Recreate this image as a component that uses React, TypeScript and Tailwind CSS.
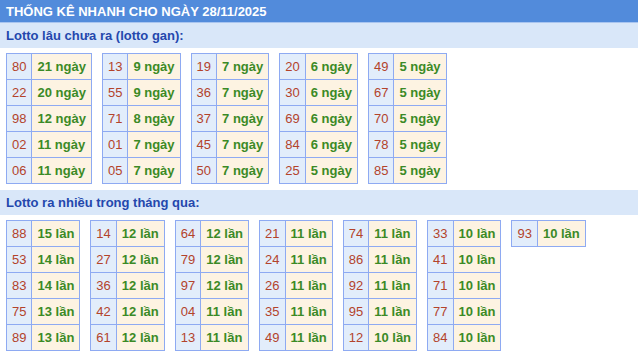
const gan: [string, number][][] = [
  [['80', 21], ['22', 20], ['98', 12], ['02', 11], ['06', 11]],
  [['13', 9], ['55', 9], ['71', 8], ['01', 7], ['05', 7]],
  [['19', 7], ['36', 7], ['37', 7], ['45', 7], ['50', 7]],
  [['20', 6], ['30', 6], ['69', 6], ['84', 6], ['25', 5]],
  [['49', 5], ['67', 5], ['70', 5], ['78', 5], ['85', 5]],
]

const nhieu: [string, number][][] = [
  [['88', 15], ['53', 14], ['83', 14], ['75', 13], ['89', 13]],
  [['14', 12], ['27', 12], ['36', 12], ['42', 12], ['61', 12]],
  [['64', 12], ['79', 12], ['97', 12], ['04', 11], ['13', 11]],
  [['21', 11], ['24', 11], ['26', 11], ['35', 11], ['49', 11]],
  [['74', 11], ['86', 11], ['92', 11], ['95', 11], ['12', 10]],
  [['33', 10], ['41', 10], ['71', 10], ['77', 10], ['84', 10]],
  [['93', 10]],
]

function StatTable({ rows, unit }: { rows: [string, number][]; unit: string }) {
  return (
    <table className="border-collapse border border-[#8eaaf2] text-[13px] leading-4">
      <tbody>
        {rows.map(([num, count]) => (
          <tr key={num} className="h-[26px]">
            <td className="border border-[#8eaaf2] bg-[#e2edfb] px-[5px] text-[#b3432b]">{num}</td>
            <td className="border border-[#8eaaf2] bg-[#fdf3e2] px-[5px] font-bold text-[#3b8a26]">
              {count} {unit}
            </td>
          </tr>
        ))}
      </tbody>
    </table>
  )
}

function Section({ title, tables, unit }: { title: string; tables: [string, number][][]; unit: string }) {
  return (
    <div>
      <div className="h-[25px] bg-[#d9e7f9] px-[6px] text-[13px] font-bold leading-[25px] text-[#2447ad]">
        {title}
      </div>
      <div className="flex items-start gap-[10px] px-[6px] pt-[5px] pb-[6px]">
        {tables.map((t, i) => (
          <StatTable key={i} rows={t} unit={unit} />
        ))}
      </div>
    </div>
  )
}

export default function App() {
  return (
    <div className="h-[352px] w-[638px] overflow-hidden bg-white font-['Liberation_Sans',Arial,sans-serif]">
      <div className="h-[23px] border-b border-[#a9c5f0] bg-[#528bdb] px-[6px] text-[13px] font-bold leading-[23px] text-white">
        THỐNG KÊ NHANH CHO NGÀY 28/11/2025
      </div>
      <Section title="Lotto lâu chưa ra (lotto gan):" tables={gan} unit="ngày" />
      <Section title="Lotto ra nhiều trong tháng qua:" tables={nhieu} unit="lần" />
    </div>
  )
}
